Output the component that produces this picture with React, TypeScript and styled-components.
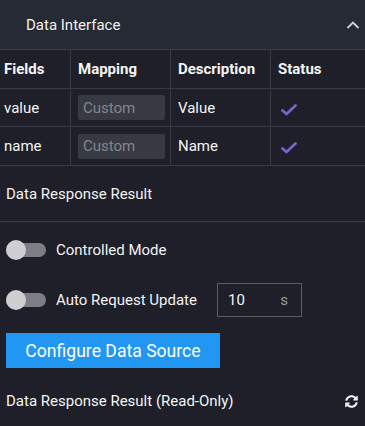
import React from "react";
import styled, { createGlobalStyle } from "styled-components";
import { FaSyncAlt } from "react-icons/fa";

const Global = createGlobalStyle`
  html, body { margin: 0; padding: 0; background: #1e1f28; }
  body { font-family: Roboto, "Noto Sans", sans-serif; color: #f2f2f2; }
  * { box-sizing: border-box; }
`;

const Panel = styled.div`
  width: 365px;
  height: 426px;
  background: #1e1f28;
  overflow: hidden;
`;

const Header = styled.div`
  height: 50px;
  background: #262a35;
  border-bottom: 1px solid #3a3d48;
  display: flex;
  align-items: center;
  justify-content: space-between;
  padding: 0 5px 0 26px;
  font-size: 15px;
  color: #f0f0f0;
`;

const Table = styled.div`
  display: grid;
  grid-template-columns: 71px 100px 100px 1fr;
  grid-template-rows: 39px 38px 39px;
`;

const Cell = styled.div<{ $first?: boolean; $head?: boolean; $last?: boolean }>`
  display: flex;
  align-items: center;
  padding-left: ${(p) => (p.$first ? "4px" : "7px")};
  border-bottom: 1px solid #383a44;
  border-right: ${(p) => (p.$last ? "none" : "1px solid #383a44")};
  font-size: 15px;
  font-weight: ${(p) => (p.$head ? 700 : 400)};
  color: #f4f4f4;
`;

const MapInput = styled.div`
  width: 87px;
  height: 25px;
  background: #383a43;
  border-radius: 2px;
  display: flex;
  align-items: center;
  padding-left: 5px;
  color: #85868c;
  font-size: 15px;
`;

const Section = styled.div`
  height: 56px;
  display: flex;
  align-items: center;
  padding-left: 6px;
  font-size: 15px;
  border-bottom: 1px solid #383a44;
`;

const Row = styled.div<{ $h: number }>`
  height: ${(p) => p.$h}px;
  display: flex;
  align-items: center;
  padding-left: 6px;
  font-size: 15px;
`;

const Track = styled.div`
  position: relative;
  width: 40px;
  height: 14px;
  border-radius: 7px;
  background: #7d7e84;
  margin-right: 10px;
  flex: none;
`;

const Knob = styled.div`
  position: absolute;
  left: 0;
  top: -3px;
  width: 20px;
  height: 20px;
  border-radius: 50%;
  background: #cfcfd1;
`;

const NumberBox = styled.div`
  width: 85px;
  height: 34px;
  border: 1px solid #5a5c64;
  margin-left: 20px;
  display: flex;
  align-items: center;
  justify-content: space-between;
  padding: 0 13px 0 10px;
  font-size: 15px;
  color: #f4f4f4;
`;

const Unit = styled.span`
  color: #9a9ba0;
`;

const ButtonRow = styled.div`
  padding: 11px 0 0 6px;
`;

const Button = styled.button`
  width: 214px;
  height: 35px;
  border: none;
  background: #2196f3;
  color: #ffffff;
  font-family: Roboto, "Noto Sans", sans-serif;
  font-size: 17.6px;
  padding: 0;
  cursor: pointer;
`;

const Footer = styled.div`
  height: 66px;
  display: flex;
  align-items: center;
  justify-content: space-between;
  padding: 0 7px 0 6px;
  font-size: 15px;
  color: #f4f4f4;
`;

const Check = () => (
  <svg width="16" height="12" viewBox="0 0 16 12" style={{ marginLeft: 3, marginTop: 4 }}>
    <path d="M1.5 6.5 L5.5 10 L14.5 1.5" fill="none" stroke="#7a62c9" strokeWidth="2.8" strokeLinecap="round" strokeLinejoin="round" />
  </svg>
);

const Chevron = () => (
  <svg width="14" height="10" viewBox="0 0 14 10">
    <path d="M1.5 8 L7 2.5 L12.5 8" fill="none" stroke="#d0d1d6" strokeWidth="1.8" />
  </svg>
);

const rows = [
  { f: "value", d: "Value" },
  { f: "name", d: "Name" },
];

export default function App() {
  return (
    <Panel>
      <Global />
      <Header>
        <span>Data Interface</span>
        <Chevron />
      </Header>
      <Table>
        <Cell $first $head>Fields</Cell>
        <Cell $head>Mapping</Cell>
        <Cell $head>Description</Cell>
        <Cell $head $last>Status</Cell>
        {rows.map((r) => (
          <React.Fragment key={r.f}>
            <Cell $first>{r.f}</Cell>
            <Cell><MapInput>Custom</MapInput></Cell>
            <Cell>{r.d}</Cell>
            <Cell $last><Check /></Cell>
          </React.Fragment>
        ))}
      </Table>
      <Section>Data Response Result</Section>
      <Row $h={56}>
        <Track><Knob /></Track>
        Controlled Mode
      </Row>
      <Row $h={44}>
        <Track><Knob /></Track>
        Auto Request Update
        <NumberBox>
          <span>10</span>
          <Unit>s</Unit>
        </NumberBox>
      </Row>
      <ButtonRow>
        <Button>Configure Data Source</Button>
      </ButtonRow>
      <Footer>
        <span>Data Response Result (Read-Only)</span>
        <FaSyncAlt size={13} color="#f0f0f0" />
      </Footer>
    </Panel>
  );
}
